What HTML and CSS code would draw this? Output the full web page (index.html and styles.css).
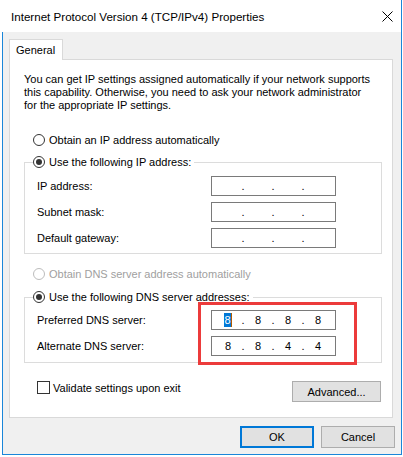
FILE: index.html
```html
<!DOCTYPE html>
<html lang="en">
<head>
  <meta charset="UTF-8">
  <meta name="viewport" content="width=device-width, initial-scale=1.0">
  <title>Internet Protocol Version 4 (TCP/IPv4) Properties</title>
  <link rel="stylesheet" href="styles.css">
</head>
<body>

  <div class="window">
    <div class="titlebar">
      <span class="title">Internet Protocol Version 4 (TCP/IPv4) Properties</span>
      <span class="close">
        <svg width="11" height="11" viewBox="0 0 11 11">
          <path d="M0.5 0.5 L10.5 10.5 M10.5 0.5 L0.5 10.5" stroke="#000" stroke-width="1" fill="none"/>
        </svg>
      </span>
    </div>

    <div class="client">
      <div class="tabs">
        <div class="tab">General</div>
      </div>

      <div class="panel">
        <p class="intro">
          You can get IP settings assigned automatically if your network supports<br>
          this capability. Otherwise, you need to ask your network administrator<br>
          for the appropriate IP settings.
        </p>

        <div class="option first">
          <span class="radio"></span>
          <span>Obtain an IP address automatically</span>
        </div>

        <fieldset class="group">
          <legend>
            <span class="option">
              <span class="radio checked"></span>
              <span>Use the following IP address:</span>
            </span>
          </legend>
          <div class="field">
            <span class="label">IP address:</span>
            <div class="ip">
              <span class="octet"></span><span class="dot">.</span>
              <span class="octet"></span><span class="dot">.</span>
              <span class="octet"></span><span class="dot">.</span>
              <span class="octet"></span>
            </div>
          </div>
          <div class="field">
            <span class="label">Subnet mask:</span>
            <div class="ip">
              <span class="octet"></span><span class="dot">.</span>
              <span class="octet"></span><span class="dot">.</span>
              <span class="octet"></span><span class="dot">.</span>
              <span class="octet"></span>
            </div>
          </div>
          <div class="field">
            <span class="label">Default gateway:</span>
            <div class="ip">
              <span class="octet"></span><span class="dot">.</span>
              <span class="octet"></span><span class="dot">.</span>
              <span class="octet"></span><span class="dot">.</span>
              <span class="octet"></span>
            </div>
          </div>
        </fieldset>

        <div class="option disabled dns-auto">
          <span class="radio"></span>
          <span>Obtain DNS server address automatically</span>
        </div>

        <fieldset class="group dns">
          <legend>
            <span class="option">
              <span class="radio checked"></span>
              <span>Use the following DNS server addresses:</span>
            </span>
          </legend>
          <div class="field">
            <span class="label">Preferred DNS server:</span>
            <div class="ip">
              <span class="octet"><span class="sel">8</span></span><span class="dot">.</span>
              <span class="octet">8</span><span class="dot">.</span>
              <span class="octet">8</span><span class="dot">.</span>
              <span class="octet">8</span>
            </div>
          </div>
          <div class="field">
            <span class="label">Alternate DNS server:</span>
            <div class="ip">
              <span class="octet">8</span><span class="dot">.</span>
              <span class="octet">8</span><span class="dot">.</span>
              <span class="octet">4</span><span class="dot">.</span>
              <span class="octet">4</span>
            </div>
          </div>
        </fieldset>

        <div class="bottom-row">
          <label class="check">
            <span class="box"></span>
            <span>Validate settings upon exit</span>
          </label>
          <button class="btn advanced">Advanced...</button>
        </div>
      </div>

      <div class="actions">
        <button class="btn default">OK</button>
        <button class="btn">Cancel</button>
      </div>
    </div>

    <div class="highlight"></div>
  </div>

</body>
</html>
```

FILE: styles.css
```css
* {
  margin: 0;
  padding: 0;
  box-sizing: border-box;
}

body {
  font-family: "Liberation Sans", Arial, sans-serif;
  font-size: 11px;
  color: #000;
  background: #fff;
}

.window {
  position: relative;
  margin-left: 2px;
  width: 400px;
  height: 455px;
  display: flex;
  flex-direction: column;
  border-right: 1px solid #1a86d9;
  border-bottom: 1px solid #1a86d9;
}

.titlebar {
  height: 32px;
  background: #fff;
  display: flex;
  align-items: center;
  justify-content: space-between;
  padding: 0 8px 0 9px;
}

.title {
  font-size: 11.6px;
  color: #000;
}

.close {
  display: flex;
  width: 11px;
  height: 11px;
}

.client {
  flex: 1;
  background: #f0f0f0;
  border-left: 1px solid #1a86d9;
  padding: 7px 6px 0 6px;
}

.tabs {
  display: flex;
}

.tab {
  position: relative;
  z-index: 1;
  width: 54px;
  height: 21px;
  margin-bottom: -1px;
  padding-left: 6px;
  line-height: 20px;
  background: #fff;
  border: 1px solid #d9d9d9;
  border-bottom: 0;
}

.panel {
  height: 359px;
  margin-right: 2px;
  background: #fff;
  border: 1px solid #d9d9d9;
  padding-top: 13px;
}

.intro {
  margin-left: 14px;
  line-height: 13px;
  white-space: nowrap;
}

.option {
  display: flex;
  align-items: center;
  gap: 4px;
  height: 16px;
  white-space: nowrap;
}

.option.first {
  margin: 20px 0 0 23px;
}

.option.dns-auto {
  margin: 12px 0 0 23px;
}

.option.disabled {
  color: #a0a0a0;
}

.radio {
  width: 12px;
  height: 12px;
  border: 1px solid #333;
  border-radius: 50%;
  background: #fff;
  display: inline-flex;
  align-items: center;
  justify-content: center;
}

.radio.checked::after {
  content: "";
  width: 6px;
  height: 6px;
  border-radius: 50%;
  background: #333;
}

.disabled .radio {
  border-color: #bcbcbc;
}

.group {
  margin: 6px 10px 0 14px;
  border: 1px solid #dcdcdc;
  padding: 6px 12px 5px 12px;
  display: flex;
  flex-direction: column;
  gap: 6px;
}

.group legend {
  margin-left: -4px;
  padding-right: 3px;
}

.group.dns {
  margin-top: 7px;
  padding-top: 5px;
  padding-bottom: 6px;
}

.field {
  display: flex;
  align-items: center;
  height: 20px;
}

.label {
  width: 174px;
}

.ip {
  width: 125px;
  height: 20px;
  border: 1px solid #7a7a7a;
  background: #fff;
  display: flex;
  align-items: center;
  padding-left: 3px;
}

.octet {
  width: 26px;
  text-align: center;
}

.dot {
  width: 4px;
  text-align: center;
}

.sel {
  background: #0078d7;
  color: #fff;
  border-right: 1px solid #b05a00;
  padding: 1px 0;
}

.bottom-row {
  display: flex;
  justify-content: space-between;
  align-items: flex-start;
  margin: 18px 11px 0 27px;
}

.check {
  display: flex;
  align-items: center;
  gap: 3px;
  height: 13px;
}

.box {
  width: 13px;
  height: 13px;
  border: 1px solid #333;
  background: #fff;
}

.btn {
  font-family: inherit;
  font-size: 11px;
  color: #000;
  background: #e1e1e1;
  border: 1px solid #adadad;
  height: 22px;
  width: 74px;
}

.btn.advanced {
  width: 89px;
  height: 21px;
}

.btn.default {
  border: 2px solid #0078d7;
}

.actions {
  display: flex;
  justify-content: flex-end;
  gap: 7px;
  margin-top: 8px;
}

.highlight {
  position: absolute;
  left: 196px;
  top: 302px;
  width: 159px;
  height: 63px;
  border: 3px solid #ec3b3b;
}
```
